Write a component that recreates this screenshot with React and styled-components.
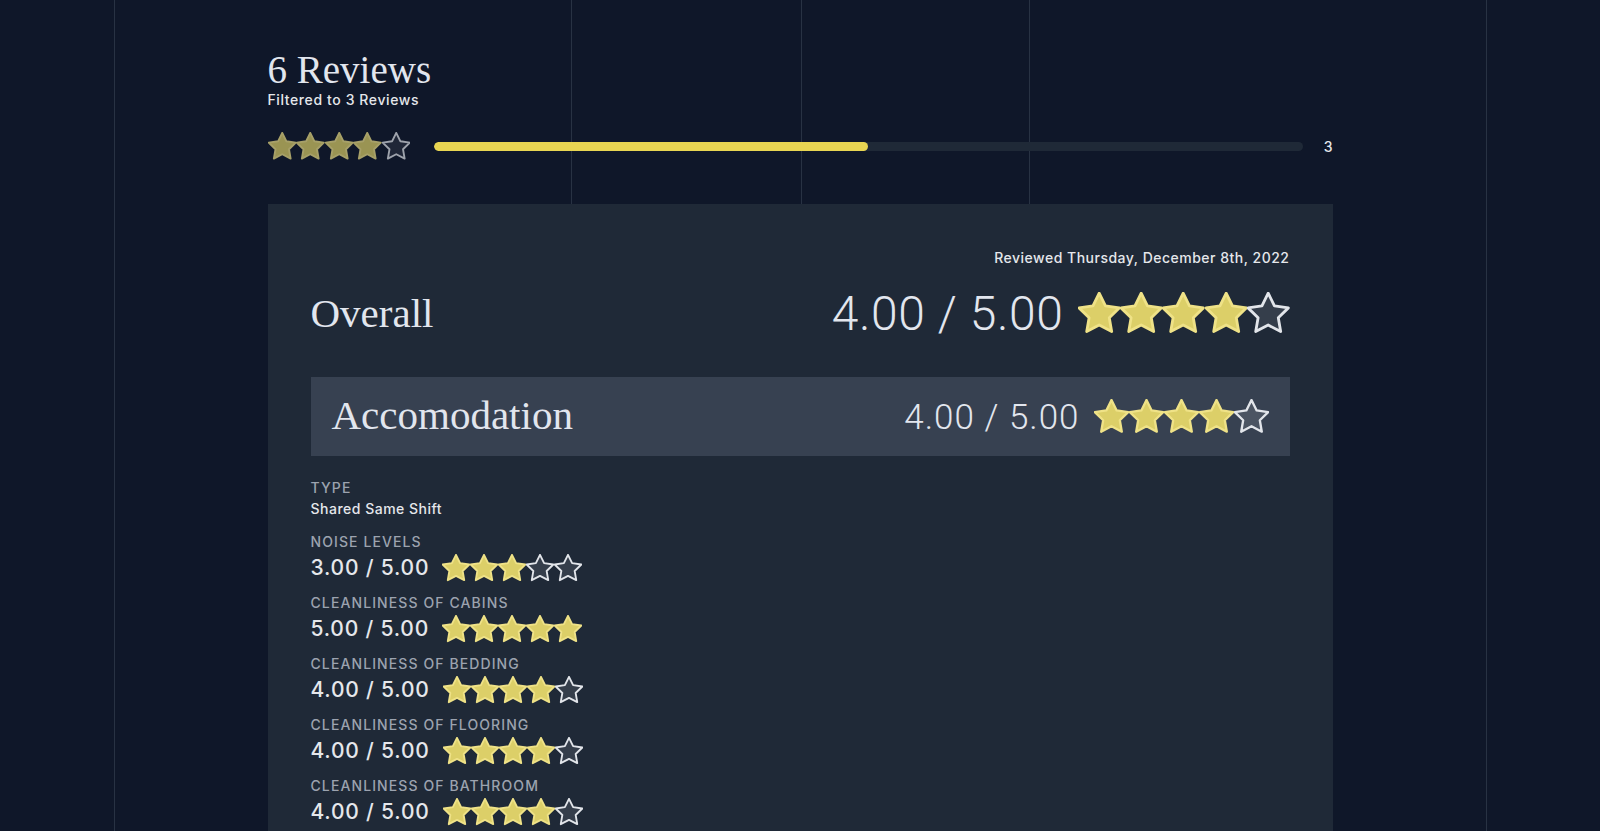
import React from "react";
import styled, { createGlobalStyle } from "styled-components";

const LINE = "#283243";

const GlobalStyle = createGlobalStyle`
  *, *::before, *::after {
    box-sizing: border-box;
  }
  body {
    margin: 0;
    background: #0f1729;
    color: #e5e7eb;
    font-family: Inter, "Noto Sans", sans-serif;
  }
`;

const STAR_POINTS =
  "12,2.2 15.09,8.46 22,9.47 17,14.34 18.18,21.22 12,17.97 5.82,21.22 7,14.34 2,9.47 8.91,8.46";

const Star = ({ filled, size }) => (
  <svg width={size} height={size} viewBox="1.5 1.6 21 21">
    <polygon
      points={STAR_POINTS}
      fill={filled ? "#dccf68" : "rgba(255,255,255,0.1)"}
      stroke={filled ? "#efe287" : "#e2e5ea"}
      strokeWidth="1.4"
      strokeLinejoin="round"
    />
  </svg>
);

const Stars = ({ value, size, dim }) => (
  <StarRow $dim={dim}>
    {[1, 2, 3, 4, 5].map((n) => (
      <Star key={n} filled={n <= value} size={size} />
    ))}
  </StarRow>
);

const details = [
  { label: "Noise Levels", value: 3 },
  { label: "Cleanliness of Cabins", value: 5 },
  { label: "Cleanliness of Bedding", value: 4 },
  { label: "Cleanliness of Flooring", value: 4 },
  { label: "Cleanliness of Bathroom", value: 4 },
];

const fmt = (v) => `${v.toFixed(2)} / 5.00`;

export default function App() {
  return (
    <>
      <GlobalStyle />
      <Frame>
        <Content>
          <Header>
            <Title>6 Reviews</Title>
            <Subtitle>Filtered to 3 Reviews</Subtitle>
            <SummaryRow>
              <Stars value={4} size={28.5} dim />
              <Bar>
                <BarFill style={{ width: "50%" }} />
              </Bar>
              <Count>3</Count>
            </SummaryRow>
          </Header>

          <Card>
            <DateLine>Reviewed Thursday, December 8th, 2022</DateLine>
            <OverallRow>
              <SerifHeading>Overall</SerifHeading>
              <ScoreGroup $gap={14}>
                <BigScore>{fmt(4)}</BigScore>
                <Stars value={4} size={42.4} />
              </ScoreGroup>
            </OverallRow>

            <Banner>
              <SerifHeading>Accomodation</SerifHeading>
              <ScoreGroup $gap={14}>
                <MidScore>{fmt(4)}</MidScore>
                <Stars value={4} size={35} />
              </ScoreGroup>
            </Banner>

            <DetailList>
              <Detail $extra={3}>
                <Label>Type</Label>
                <PlainValue>Shared Same Shift</PlainValue>
              </Detail>
              {details.map((d) => (
                <Detail key={d.label}>
                  <Label>{d.label}</Label>
                  <ScoreGroup $gap={13} $offset={1}>
                    <SmallScore>{fmt(d.value)}</SmallScore>
                    <Stars value={d.value} size={28} />
                  </ScoreGroup>
                </Detail>
              ))}
            </DetailList>
          </Card>
        </Content>
      </Frame>
    </>
  );
}

const Frame = styled.div`
  width: 1373px;
  margin: 0 auto;
  min-height: 100vh;
  border-left: 1px solid ${LINE};
  border-right: 1px solid ${LINE};
  background-image: linear-gradient(${LINE}, ${LINE}),
    linear-gradient(${LINE}, ${LINE}), linear-gradient(${LINE}, ${LINE});
  background-size: 1px 100%;
  background-repeat: no-repeat;
  background-position: 456px 0, 686px 0, 914px 0;
`;

const Content = styled.div`
  width: 1065px;
  margin: 0 auto;
`;

const Header = styled.header`
  padding-top: 46px;
`;

const Title = styled.h1`
  margin: 0;
  font-family: "Liberation Serif", serif;
  font-weight: 400;
  font-size: 39px;
  line-height: 47px;
  color: #e2e6ee;
`;

const Subtitle = styled.div`
  font-size: 14px;
  font-weight: 500;
  line-height: 20px;
  letter-spacing: 0.6px;
  color: #e5e7eb;
  margin-top: -3px;
`;

const SummaryRow = styled.div`
  display: flex;
  align-items: center;
  margin-top: 22px;
`;

const StarRow = styled.div`
  display: flex;
  align-items: center;
  opacity: ${(p) => (p.$dim ? 0.68 : 1)};
  svg {
    display: block;
  }
`;

const Bar = styled.div`
  flex: 1;
  height: 9px;
  margin-left: 24px;
  border-radius: 5px;
  background: #1f2937;
  overflow: hidden;
`;

const BarFill = styled.div`
  height: 100%;
  border-radius: 5px;
  background: #e8d552;
`;

const Count = styled.span`
  margin-left: 21px;
  min-width: 6px;
  font-size: 14px;
  font-weight: 500;
  color: #e5e7eb;
`;

const Card = styled.section`
  margin-top: 43px;
  background: #1f2937;
  padding: 44px 43px 40px;
`;

const DateLine = styled.div`
  text-align: right;
  font-size: 14px;
  font-weight: 500;
  line-height: 20px;
  letter-spacing: 0.5px;
  color: #e5e7eb;
`;

const OverallRow = styled.div`
  display: flex;
  align-items: center;
  justify-content: space-between;
  margin-top: 17px;
  height: 58px;
`;

const SerifHeading = styled.h2`
  margin: 0;
  font-family: "Liberation Serif", serif;
  font-weight: 400;
  font-size: 41px;
  line-height: 1.2;
  color: #e2e6ee;
`;

const ScoreGroup = styled.div`
  display: flex;
  align-items: center;
  gap: ${(p) => p.$gap}px;
  margin-top: ${(p) => p.$offset || 0}px;
`;

const BigScore = styled.span`
  font-family: Roboto, Inter, sans-serif;
  font-size: 48px;
  font-weight: 300;
  line-height: 1;
  letter-spacing: 0.6px;
  color: #e2e6ee;
`;

const MidScore = styled.span`
  font-family: Roboto, Inter, sans-serif;
  font-size: 35px;
  font-weight: 300;
  line-height: 1;
  letter-spacing: 1px;
  color: #e2e6ee;
  margin-top: 3px;
`;

const Banner = styled.div`
  display: flex;
  align-items: center;
  justify-content: space-between;
  height: 79px;
  margin-top: 34px;
  padding: 0 21px;
  background: #374151;
`;

const DetailList = styled.div`
  display: flex;
  flex-direction: column;
  gap: 10px;
  margin-top: 22px;
`;

const Detail = styled.div`
  display: flex;
  flex-direction: column;
  margin-bottom: ${(p) => p.$extra || 0}px;
`;

const Label = styled.div`
  font-size: 14px;
  font-weight: 500;
  line-height: 20px;
  text-transform: uppercase;
  letter-spacing: 1.1px;
  color: #9ca3af;
`;

const PlainValue = styled.div`
  margin-top: 1px;
  font-size: 14px;
  font-weight: 500;
  line-height: 20px;
  letter-spacing: 0.5px;
  color: #e5e7eb;
`;

const SmallScore = styled.span`
  font-size: 21px;
  font-weight: 500;
  line-height: 30px;
  letter-spacing: 0.8px;
  color: #e5e7eb;
`;
